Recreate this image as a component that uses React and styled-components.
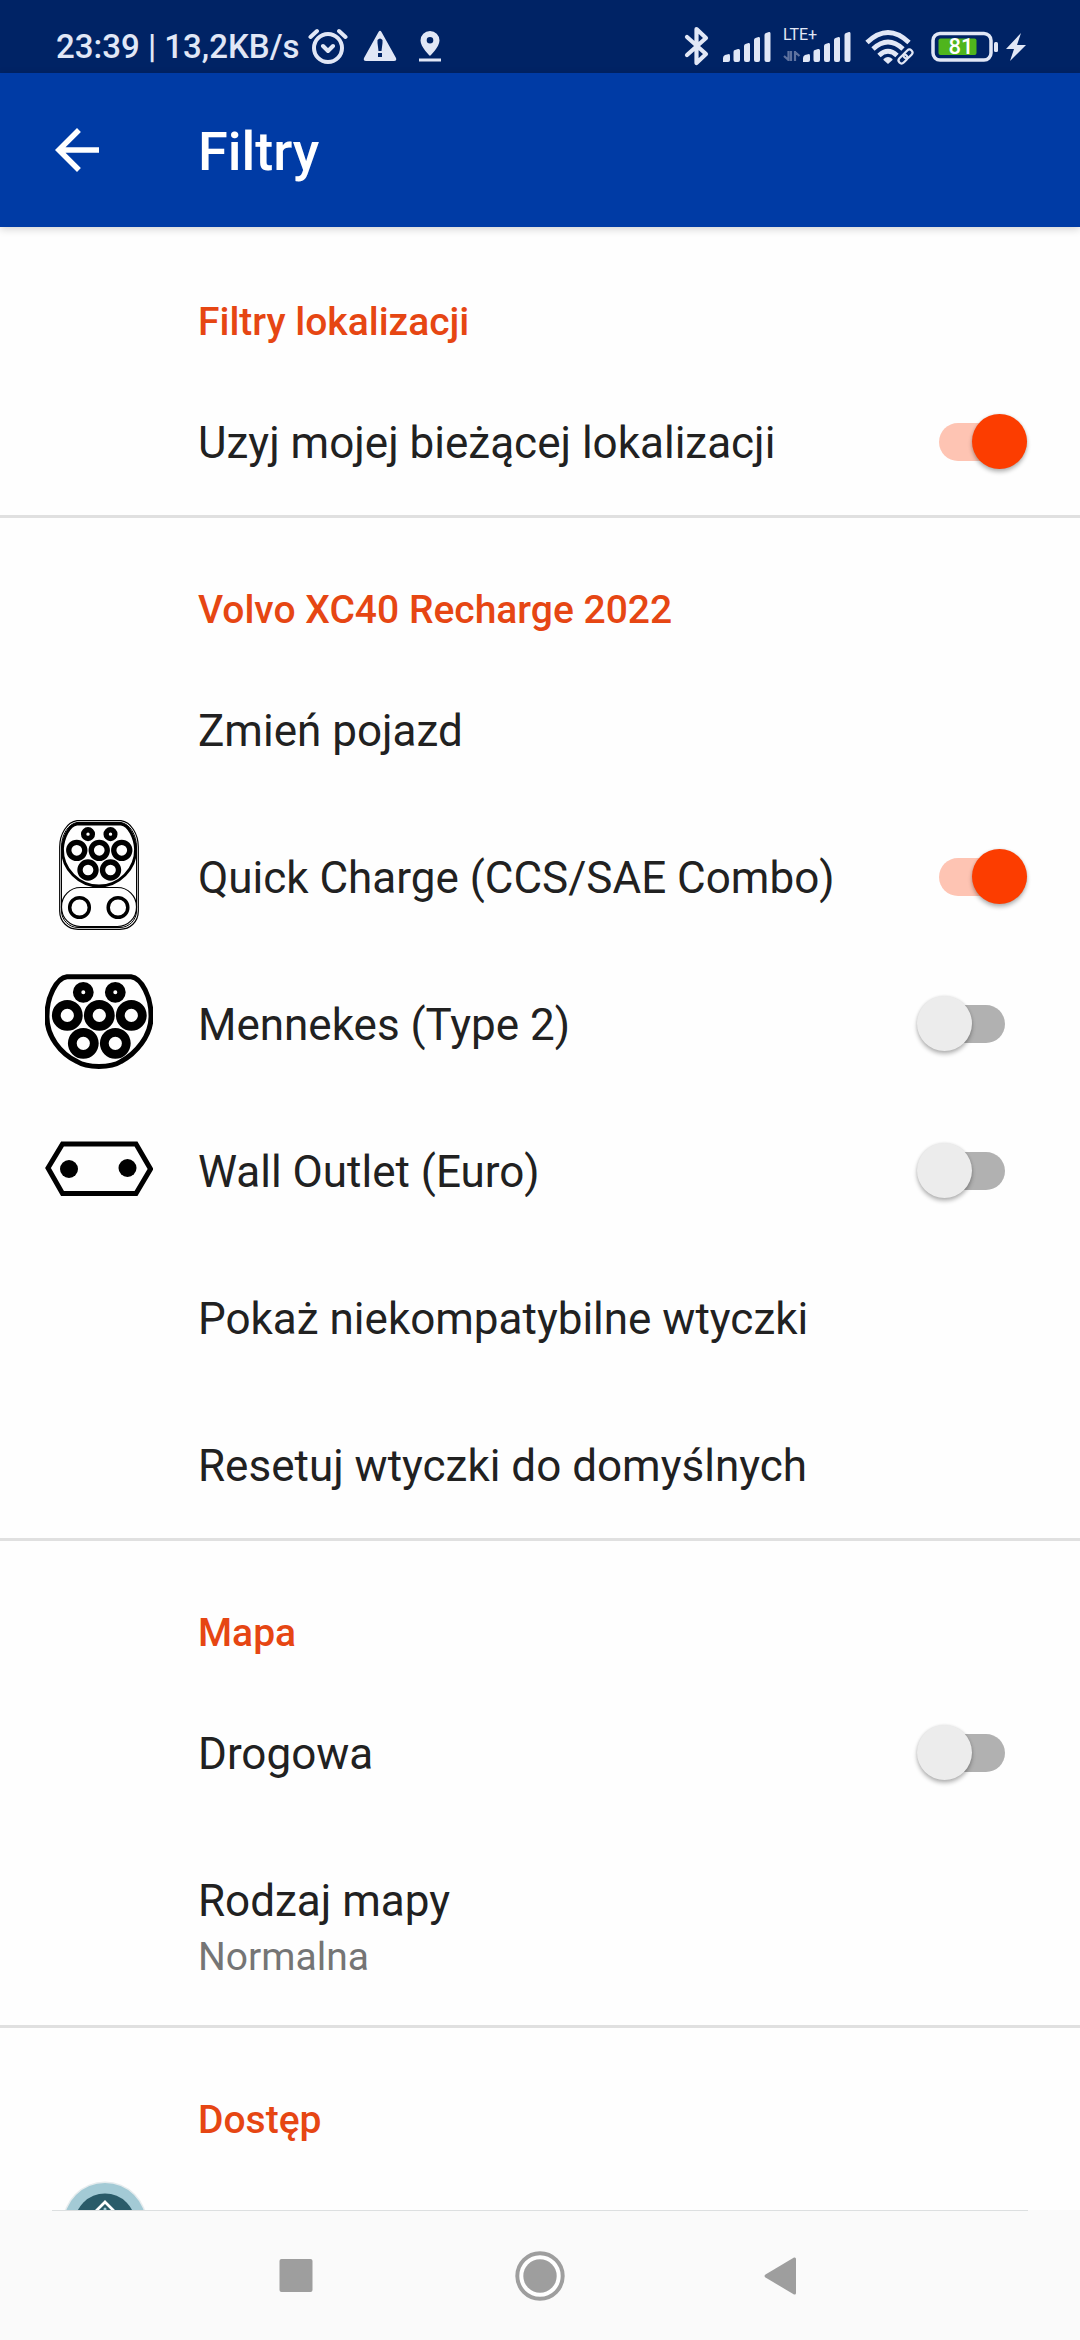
import React, { useId } from "react";
import styled, { createGlobalStyle } from "styled-components";

const GlobalStyle = createGlobalStyle`
  *, *::before, *::after { box-sizing: border-box; }
  html, body, #root { height: 100%; }
  body {
    margin: 0;
    background: #fefefe;
    color: #212121;
    font-family: Roboto, "Noto Sans", sans-serif;
  }
`;

const Screen = styled.div`
  display: flex;
  flex-direction: column;
  height: 100vh;
  overflow: hidden;
`;

const StatusBar = styled.header`
  flex: none;
  display: flex;
  justify-content: space-between;
  align-items: center;
  height: 73px;
  padding: 18px 54px 0 56px;
  background: #002365;
  color: #e1e7f6;
`;

const StatusGroup = styled.div`
  display: flex;
  align-items: center;
`;

const Clock = styled.span`
  padding-top: 3px;
  font-size: 33px;
  font-weight: 500;
  line-height: 40px;
`;

const StatusIcon = styled.svg`
  display: block;
  height: 44px;
  width: ${(p) => p.$width}px;
  margin-left: ${(p) => p.$gap || 0}px;
  fill: #e1e7f6;
`;

const Network = styled.div`
  display: grid;
  align-items: start;
  width: 68px;
  height: 44px;
  margin-left: 12px;
`;

const NetworkLabel = styled.span`
  grid-area: 1 / 1;
  font-size: 16px;
  line-height: 22px;
  white-space: nowrap;
`;

const NetworkSignal = styled.svg`
  grid-area: 1 / 1;
  width: 68px;
  height: 44px;
  fill: #e1e7f6;
`;

const Battery = styled.div`
  display: grid;
  align-items: center;
  width: 67px;
  height: 44px;
  margin-left: 16px;
`;

const BatteryShape = styled.svg`
  grid-area: 1 / 1;
  width: 67px;
  height: 44px;
`;

const BatteryLevel = styled.span`
  grid-area: 1 / 1;
  width: 60px;
  padding-top: 2px;
  text-align: center;
  color: #fff;
  font-size: 22px;
  font-weight: 500;
  line-height: 24px;
`;

const AppBar = styled.div`
  flex: none;
  z-index: 1;
  display: flex;
  align-items: center;
  height: 154px;
  padding-left: 44px;
  background: #003ba5;
  box-shadow: 0 2px 8px rgba(0, 0, 0, 0.18);
`;

const BackButton = styled.button`
  display: grid;
  place-items: center;
  width: 66px;
  height: 66px;
  margin-right: 88px;
  padding: 0;
  border: 0;
  background: none;

  svg { width: 66px; height: 66px; fill: #fff; }
`;

const Title = styled.h1`
  margin: 0;
  padding-top: 4px;
  color: #fff;
  font-size: 54px;
  font-weight: 500;
  line-height: 64px;
`;

const Content = styled.main`
  flex: 1;
  min-height: 0;
  overflow: hidden;
`;

const Section = styled.section`
  border-top: 3px solid ${(p) => (p.$first ? "transparent" : "#e0e0e0")};
`;

const SectionTitle = styled.h2`
  margin: 0;
  padding: 66px 44px 20px 198px;
  color: #e64613;
  font-size: 39px;
  font-weight: 500;
  line-height: 52px;
`;

const rowLayout = `
  display: flex;
  align-items: center;
  width: 100%;
  min-height: 147px;
  margin: 0;
  padding: 0 44px 0 0;
  border: 0;
  background: none;
  color: inherit;
  font: inherit;
  text-align: left;
`;

const SwitchRow = styled.label`${rowLayout}`;
const ActionRow = styled.button`${rowLayout}`;

const IconSlot = styled.span`
  flex: none;
  display: flex;
  justify-content: center;
  width: 198px;
  padding-bottom: 3px;
  svg { display: block; }
`;

const RowText = styled.span`
  flex: 1;
  display: flex;
  flex-direction: column;
  padding: 46px 0 42px;
`;

const RowTitle = styled.span`
  font-size: 44px;
  line-height: 59px;
`;

const RowSummary = styled.span`
  color: #757575;
  font-size: 39px;
  line-height: 52px;
`;

const Switch = styled.input`
  appearance: none;
  flex: none;
  position: relative;
  width: 88px;
  height: 38px;
  margin: 0 ${(p) => (p.checked ? 9 : 31)}px 0 0;
  border-radius: 19px;
  background: linear-gradient(
    to right,
    ${(p) => (p.checked ? "#fec4b3 0 100%" : "transparent 0 20px, #b1b1b1 20px 100%")}
  );

  &::before {
    content: "";
    position: absolute;
    top: -9px;
    ${(p) => (p.checked ? "right: 0;" : "left: 0;")}
    width: 55px;
    height: 55px;
    border-radius: 50%;
    background: ${(p) => (p.checked ? "#fc3d00" : "#ececec")};
    box-shadow: 0 3px 4px rgba(0, 0, 0, 0.28), 0 0 3px rgba(0, 0, 0, 0.1);
  }
`;

const PinRow = styled.div`
  display: flex;
  padding: 15px 44px 15px 62px;
`;

const NavBar = styled.nav`
  flex: none;
  height: 130px;
  padding: 0 52px;
  background: #fafafa;
`;

const NavButtons = styled.div`
  display: flex;
  justify-content: center;
  gap: 178px;
  height: 130px;
  border-top: 1px solid #dcdfe0;
`;

const NavButton = styled.button`
  display: grid;
  place-items: center;
  width: 66px;
  padding: 0;
  border: 0;
  background: none;
  svg { width: 66px; height: 66px; fill: #9e9e9e; }
`;

const Bars = ({ x = 0 }) => (
  <g transform={`translate(${x} 0)`}>
    <path d="M0 38V34Q0 32 2 31L6 30Q7 30 7 32V36Q7 38 5 38Z" />
    <path d="M10.500 36V28Q10.500 26 12 26L15 25Q17 24.500 17 26.500V36Q17 38 15 38H12.500Q10.500 38 10.500 36Z" />
    <path d="M21 36V22Q21 20.500 22.500 20L25.500 19Q27 18.500 27 20.500V36Q27 38 25 38H23Q21 38 21 36Z" />
    <path d="M31 36V16Q31 14.500 32.500 14L35.500 13Q37 12.500 37 14.500V36Q37 38 35 38H33Q31 38 31 36Z" />
    <path d="M41.500 36V11Q41.500 9.500 43 9L46 8Q47.500 7.500 47.500 9.500V36Q47.500 38 45.500 38H43.500Q41.500 38 41.500 36Z" />
  </g>
);

const Pins = ({ small, big, smallStroke, bigStroke }) => (
  <g>
    {[[37, 18], [69, 18]].map(([x, y]) => (
      <circle key={x} cx={x} cy={y} r={small} strokeWidth={smallStroke} />
    ))}
    {[[21, 41], [53, 41], [85, 41], [37, 69], [69, 69]].map(([x, y]) => (
      <circle key={`${x}-${y}`} cx={x} cy={y} r={big} strokeWidth={bigStroke} />
    ))}
  </g>
);

const CcsIcon = () => (
  <svg width="80" height="110" viewBox="0 0 80 110" fill="none" stroke="#000">
    <path d="M18 .7H62C72 2 79.300 14 79.300 27V91C79.300 102 71 109.300 61 109.300H19C9 109.300 .7 102 .7 91V27C.7 14 8 2 18 .7Z" strokeWidth="1.200" />
    <path d="M18 2.500H62C71 4 77.500 15 77.500 27V91C77.500 100 70 107.500 61 107.500H19C10 107.500 2.500 100 2.500 91V27C2.500 15 9 4 18 2.500Z" strokeWidth="1" />
    <path d="M18 4H62C70 5 76 18 76.500 29C77 49 60 66 40 66S3 49 3.500 29C4 18 10 5 18 4Z" strokeWidth="2.800" />
    <rect x="2.500" y="67.500" width="75" height="39" rx="19" strokeWidth="1.200" />
    <circle cx="20.500" cy="87.500" r="9.800" strokeWidth="3.500" />
    <circle cx="59" cy="87.500" r="9.800" strokeWidth="3.500" />
    <g transform="translate(3 1.500) scale(.703)">
      <Pins small={6.2} big={11.4} smallStroke={7.6} bigStroke={7.6} />
    </g>
  </svg>
);

const MennekesIcon = () => (
  <svg width="108" height="96" viewBox="0 0 108 96" fill="none" stroke="#000">
    <path d="M22 2.800H86C97 4 106 24 106 41C107 62 90 80 76 87.500C66 94 42 94 32 87.500C16 80 1 62 2 41C2 24 11 4 22 2.800Z" strokeWidth="5" />
    <g transform="translate(1.300 .3)">
      <Pins small={6.2} big={11} smallStroke={8.4} bigStroke={8.8} />
    </g>
  </svg>
);

const EuroIcon = () => (
  <svg width="108" height="56" viewBox="0 0 108 56">
    <path d="M17.500 3H91L105.500 28L91 52.500H17.500L3 27Z" fill="none" stroke="#000" strokeWidth="5" />
    <circle cx="24" cy="28" r="9" />
    <circle cx="82.500" cy="27" r="9" />
  </svg>
);

const PinIcon = () => (
  <svg width="86" height="86" viewBox="0 0 86 86">
    <circle cx="43" cy="43" r="42.500" fill="#e6ecee" />
    <circle cx="43" cy="43" r="41" fill="#a3cad5" />
    <circle cx="43" cy="43" r="30.500" fill="#2a5b69" />
    <path d="M43 21L24 40H30V62H56V40H62Z" fill="none" stroke="#fff" strokeWidth="2.800" />
    <circle cx="43" cy="28" r="1.500" fill="#a3cad5" />
  </svg>
);

function Toggle({ icon, label, on }) {
  const id = useId();
  return (
    <SwitchRow htmlFor={id}>
      <IconSlot>{icon}</IconSlot>
      <RowText><RowTitle>{label}</RowTitle></RowText>
      <Switch id={id} type="checkbox" role="switch" checked={!!on} readOnly />
    </SwitchRow>
  );
}

function Action({ label, summary }) {
  return (
    <ActionRow type="button">
      <IconSlot />
      <RowText>
        <RowTitle>{label}</RowTitle>
        {summary && <RowSummary>{summary}</RowSummary>}
      </RowText>
    </ActionRow>
  );
}

function Status() {
  return (
    <StatusBar>
      <StatusGroup>
        <Clock>23:39 | 13,2KB/s</Clock>
        <StatusIcon $width={40} $gap={8} viewBox="0 0 40 44">
          <g fill="none" stroke="#e1e7f6" strokeWidth="4" strokeLinecap="round" strokeLinejoin="round">
            <circle cx="20" cy="24" r="14" />
            <path d="M2.500 13L9 7M31 7L37.500 13M15 22L20 27L25 22" />
          </g>
        </StatusIcon>
        <StatusIcon $width={34} $gap={15} viewBox="0 0 34 44">
          <path fillRule="evenodd" d="M15.500 8Q17 5.500 18.500 8L33 34Q34 37 31 37H3Q0 37 1 34ZM14.500 16V19L15.500 27H18.500L19.500 19V16Q17 13 14.500 16ZM15 29V33H19V29Z" />
        </StatusIcon>
        <StatusIcon $width={22} $gap={22} viewBox="0 0 22 44">
          <path fillRule="evenodd" d="M11 7A9.500 9.500 0 0 0 1.500 16.500C1.500 23 11 32 11 32S20.500 23 20.500 16.500A9.500 9.500 0 0 0 11 7ZM11 13A3.300 3.300 0 1 1 11 19.600A3.300 3.300 0 0 1 11 13ZM0 34.500H22V37.500H0Z" />
        </StatusIcon>
      </StatusGroup>
      <StatusGroup>
        <StatusIcon $width={26} viewBox="0 0 26 44">
          <path d="M4 13L23 30L13.500 39V5L23 14L4 31" fill="none" stroke="#e1e7f6" strokeWidth="4.200" strokeLinejoin="round" strokeLinecap="round" />
        </StatusIcon>
        <StatusIcon $width={48} $gap={14} viewBox="0 0 48 44"><Bars /></StatusIcon>
        <Network>
          <NetworkLabel>LTE+</NetworkLabel>
          <NetworkSignal viewBox="0 0 68 44">
            <Bars x={20} />
            <path d="M5.500 27V37M5.500 36L1 32M8 37V27M12 37V27M12 28L16.500 32" fill="none" stroke="#5e729f" strokeWidth="2.200" />
          </NetworkSignal>
        </Network>
        <StatusIcon $width={50} $gap={14} viewBox="0 0 50 44">
          <g fill="none" stroke="#e1e7f6" strokeWidth="4.800">
            <path d="M2 18.500Q23 -1.500 44 18.500M8 25Q23 11 38 25M14 31.500Q23 23 32 31.500" />
          </g>
          <path d="M18.500 35Q23 31 27.500 35V36L23 40L18.500 36Z" />
          <path d="M37 37L45 29" stroke="#002365" strokeWidth="13" strokeLinecap="round" />
          <g fill="none" stroke="#e1e7f6" strokeWidth="2.200">
            <rect x="33" y="32" width="10" height="6" rx="3" transform="rotate(-45 38 35)" />
            <rect x="38" y="27" width="10" height="6" rx="3" transform="rotate(-45 43 30)" />
          </g>
        </StatusIcon>
        <Battery>
          <BatteryShape viewBox="0 0 67 44">
            <rect x="2" y="9.500" width="58" height="26.500" rx="7" fill="none" stroke="#e1e7f6" strokeWidth="3.500" />
            <rect x="7.500" y="14.500" width="38" height="16.500" rx="2" fill="#4fb51d" />
            <rect x="63" y="18" width="4" height="10" rx="1.500" fill="#e1e7f6" />
          </BatteryShape>
          <BatteryLevel>81</BatteryLevel>
        </Battery>
        <StatusIcon $width={20} $gap={8} viewBox="0 0 20 44">
          <path d="M15 9L0 25H8L4 37L20 21H11Z" />
        </StatusIcon>
      </StatusGroup>
    </StatusBar>
  );
}

export default function App() {
  return (
    <Screen>
      <GlobalStyle />
      <Status />
      <AppBar>
        <BackButton type="button" aria-label="Wstecz">
          <svg viewBox="0 0 24 24"><path d="M20 11H7.830l5.590-5.590L12 4l-8 8 8 8 1.410-1.410L7.830 13H20v-2z" /></svg>
        </BackButton>
        <Title>Filtry</Title>
      </AppBar>
      <Content>
        <Section $first>
          <SectionTitle>Filtry lokalizacji</SectionTitle>
          <Toggle label="Uzyj mojej bieżącej lokalizacji" on />
        </Section>
        <Section>
          <SectionTitle>Volvo XC40 Recharge 2022</SectionTitle>
          <Action label="Zmień pojazd" />
          <Toggle icon={<CcsIcon />} label="Quick Charge (CCS/SAE Combo)" on />
          <Toggle icon={<MennekesIcon />} label="Mennekes (Type 2)" />
          <Toggle icon={<EuroIcon />} label="Wall Outlet (Euro)" />
          <Action label="Pokaż niekompatybilne wtyczki" />
          <Action label="Resetuj wtyczki do domyślnych" />
        </Section>
        <Section>
          <SectionTitle>Mapa</SectionTitle>
          <Toggle label="Drogowa" />
          <Action label="Rodzaj mapy" summary="Normalna" />
        </Section>
        <Section>
          <SectionTitle>Dostęp</SectionTitle>
          <PinRow><PinIcon /></PinRow>
        </Section>
      </Content>
      <NavBar>
        <NavButtons>
          <NavButton type="button" aria-label="Ostatnie">
            <svg viewBox="0 0 66 66"><rect x="16.500" y="16" width="33" height="33" rx="2" /></svg>
          </NavButton>
          <NavButton type="button" aria-label="Ekran główny">
            <svg viewBox="0 0 66 66">
              <circle cx="33" cy="33" r="22.700" fill="#fff" stroke="#9e9e9e" strokeWidth="4" />
              <circle cx="33" cy="33" r="16.700" />
            </svg>
          </NavButton>
          <NavButton type="button" aria-label="Wróć">
            <svg viewBox="0 0 66 66"><path d="M45 16V50Q45 52 43 51.500L14.500 34.500Q12.500 33 14.500 31.500L43 14.500Q45 14 45 16Z" /></svg>
          </NavButton>
        </NavButtons>
      </NavBar>
    </Screen>
  );
}
